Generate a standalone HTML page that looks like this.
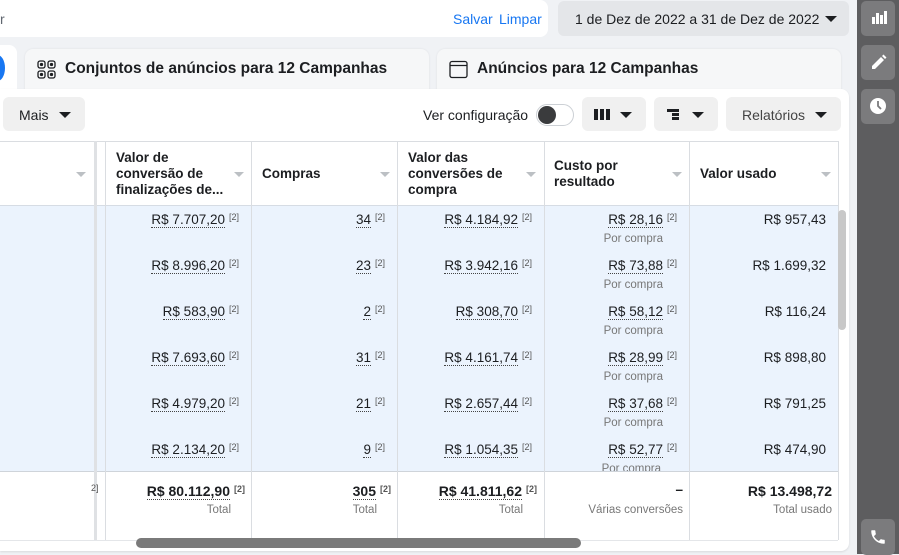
<!DOCTYPE html><html><head><style>
*{box-sizing:border-box;margin:0;padding:0}
body{width:899px;height:554px;overflow:hidden;background:#f0f2f5;font-family:"Liberation Sans",Arial,sans-serif;color:#1c1e21;position:relative}
.a{position:absolute}
.side{left:857px;top:0;width:42px;height:554px;background:#5d5d5f}
.sb{left:861px;width:34px;height:35px;background:#7b7b7d;border-radius:5px}
.btn{background:#f0f0f0;border-radius:6px;height:34px;top:97px}
.tri{display:inline-block;width:0;height:0;border-left:6px solid transparent;border-right:6px solid transparent;border-top:6px solid #1c1e21}
.hd{font-weight:bold;font-size:13.5px;line-height:16px;color:#1c1e21}
.st{width:0;height:0;border-left:5px solid transparent;border-right:5px solid transparent;border-top:5px solid #bcc0c4}
.v{font-size:13.5px;text-align:right;white-space:nowrap}
.u{border-bottom:1px dotted #444;}
sup{font-size:9px;color:#555;vertical-align:4px;margin-left:4px}
.sub{font-size:11.5px;color:#777;text-align:right}
.vl{width:1px;background:#dadde1}
</style></head><body>
<!-- top bar -->
<div class="a" style="left:0;top:0;width:548px;height:37px;background:#fff;border-radius:0 8px 8px 0"></div>
<div class="a" style="left:0;top:11px;font-size:14px;color:#606770">r</div>
<div class="a" style="left:453px;top:11px;font-size:14px;color:#1877f2">Salvar</div>
<div class="a" style="left:499px;top:11px;font-size:14px;color:#1877f2">Limpar</div>
<div class="a" style="left:558px;top:1px;width:291px;height:35px;background:#e4e6e9;border-radius:6px"></div>
<div class="a" style="left:575px;top:11px;font-size:14px;color:#1c1e21">1 de Dez de 2022 a 31 de Dez de 2022</div>
<div class="a tri" style="left:825px;top:16px"></div>
<!-- tabs -->
<div class="a" style="left:0;top:45px;width:17px;height:50px;background:#fff;border-radius:0 8px 0 0"></div>
<div class="a" style="left:-10px;top:55px;width:15px;height:26px;background:#1877f2;border-radius:50%"></div>
<div class="a" style="left:25px;top:49px;width:404px;height:42px;background:#f6f7f8;border-radius:8px 8px 0 0;box-shadow:0 0 2px rgba(0,0,0,.08)"></div>
<svg class="a" style="left:37px;top:60px" width="19" height="19" viewBox="0 0 19 19" fill="none" stroke="#1c1e21" stroke-width="1.3"><rect x="1" y="1" width="7" height="7" rx="2"/><rect x="11" y="1" width="7" height="7" rx="2"/><rect x="1" y="11" width="7" height="7" rx="2"/><rect x="11" y="11" width="7" height="7" rx="2"/><circle cx="4.5" cy="4.5" r="1" fill="#1c1e21"/><circle cx="14.5" cy="4.5" r="1" fill="#1c1e21"/><circle cx="4.5" cy="14.5" r="1" fill="#1c1e21"/><circle cx="14.5" cy="14.5" r="1" fill="#1c1e21"/></svg>
<div class="a" style="left:65px;top:60px;font-size:15.5px;font-weight:bold">Conjuntos de anúncios para 12 Campanhas</div>
<div class="a" style="left:437px;top:49px;width:404px;height:42px;background:#f6f7f8;border-radius:8px 8px 0 0;box-shadow:0 0 2px rgba(0,0,0,.08)"></div>
<svg class="a" style="left:449px;top:60px" width="19" height="19" viewBox="0 0 19 19" fill="none" stroke="#1c1e21" stroke-width="1.3"><rect x="1" y="1.5" width="17" height="16" rx="2"/><line x1="1" y1="5.5" x2="18" y2="5.5"/></svg>
<div class="a" style="left:477px;top:60px;font-size:15.5px;font-weight:bold">Anúncios para 12 Campanhas</div>
<!-- main panel -->
<div class="a" style="left:0;top:89px;width:849px;height:462px;background:#fff;border-radius:0 8px 8px 0;box-shadow:0 1px 2px rgba(0,0,0,.1)"></div>
<div class="a btn" style="left:3px;width:82px"></div>
<div class="a" style="left:19px;top:107px;font-size:14px">Mais</div>
<div class="a tri" style="left:59px;top:112px"></div>
<div class="a" style="left:423px;top:107px;font-size:14px">Ver configuração</div>
<div class="a" style="left:536px;top:104px;width:38px;height:22px;border:1px solid #ccd0d5;border-radius:11px;background:#fff"></div>
<div class="a" style="left:538px;top:106px;width:18px;height:18px;border-radius:50%;background:#3a3b3d"></div>
<div class="a btn" style="left:582px;width:64px"></div>
<div class="a" style="left:594px;top:109px;width:4px;height:11px;background:#1c1e21"></div>
<div class="a" style="left:600px;top:109px;width:4px;height:11px;background:#1c1e21"></div>
<div class="a" style="left:606px;top:109px;width:4px;height:11px;background:#1c1e21"></div>
<div class="a tri" style="left:620px;top:112px"></div>
<div class="a btn" style="left:654px;width:64px"></div>
<div class="a" style="left:667px;top:109px;width:12px;height:3px;background:#1c1e21"></div>
<div class="a" style="left:672px;top:113px;width:7px;height:3px;background:#1c1e21"></div>
<div class="a" style="left:672px;top:117px;width:7px;height:3px;background:#1c1e21"></div>
<div class="a tri" style="left:692px;top:112px"></div>
<div class="a btn" style="left:726px;width:115px"></div>
<div class="a" style="left:742px;top:107px;font-size:14px;color:#444">Relatórios</div>
<div class="a tri" style="left:815px;top:112px"></div>
<!-- table -->
<div class="a" style="left:0;top:141px;width:838px;height:1px;background:#dadde1"></div>
<div class="a" style="left:0;top:205px;width:838px;height:266px;background:#ebf3fd"></div>
<div class="a" style="left:0;top:205px;width:838px;height:1px;background:#d6dce4"></div>
<div class="a" style="left:0;top:471px;width:838px;height:1px;background:#cfd4da"></div>
<div class="a" style="left:94px;top:141px;width:3px;height:399px;background:#dfe1e4"></div>
<div class="a vl" style="left:105px;top:141px;height:399px"></div>
<div class="a vl" style="left:251px;top:141px;height:399px"></div>
<div class="a vl" style="left:397px;top:141px;height:399px"></div>
<div class="a vl" style="left:544px;top:141px;height:399px"></div>
<div class="a vl" style="left:689px;top:141px;height:399px"></div>
<div class="a vl" style="left:838px;top:141px;height:399px"></div>
<div class="a st" style="left:76px;top:172px"></div>
<div class="a hd" style="left:116px;top:150px">Valor de<br>conversão de<br>finalizações de...</div><div class="a st" style="left:234px;top:172px"></div>
<div class="a hd" style="left:262px;top:166px">Compras</div><div class="a st" style="left:380px;top:172px"></div>
<div class="a hd" style="left:408px;top:150px">Valor das<br>conversões de<br>compra</div><div class="a st" style="left:526px;top:172px"></div>
<div class="a hd" style="left:554px;top:158px">Custo por<br>resultado</div><div class="a st" style="left:672px;top:172px"></div>
<div class="a hd" style="left:700px;top:166px">Valor usado</div><div class="a st" style="left:821px;top:172px"></div>
<div class="a" style="left:838px;top:210px;width:8px;height:120px;background:#c8c8c8;border-radius:4px"></div>

<!-- rows -->
<div class="a v" style="right:660px;top:212px"><span class="u">R$ 7.707,20</span><sup>[2]</sup></div>
<div class="a v" style="right:514px;top:212px"><span class="u">34</span><sup>[2]</sup></div>
<div class="a v" style="right:367px;top:212px"><span class="u">R$ 4.184,92</span><sup>[2]</sup></div>
<div class="a v" style="right:222px;top:212px"><span class="u">R$ 28,16</span><sup>[2]</sup></div>
<div class="a sub" style="right:236px;top:233px">Por compra</div>
<div class="a v" style="right:73px;top:212px">R$ 957,43</div>

<div class="a v" style="right:660px;top:258px"><span class="u">R$ 8.996,20</span><sup>[2]</sup></div>
<div class="a v" style="right:514px;top:258px"><span class="u">23</span><sup>[2]</sup></div>
<div class="a v" style="right:367px;top:258px"><span class="u">R$ 3.942,16</span><sup>[2]</sup></div>
<div class="a v" style="right:222px;top:258px"><span class="u">R$ 73,88</span><sup>[2]</sup></div>
<div class="a sub" style="right:236px;top:279px">Por compra</div>
<div class="a v" style="right:73px;top:258px">R$ 1.699,32</div>

<div class="a v" style="right:660px;top:304px"><span class="u">R$ 583,90</span><sup>[2]</sup></div>
<div class="a v" style="right:514px;top:304px"><span class="u">2</span><sup>[2]</sup></div>
<div class="a v" style="right:367px;top:304px"><span class="u">R$ 308,70</span><sup>[2]</sup></div>
<div class="a v" style="right:222px;top:304px"><span class="u">R$ 58,12</span><sup>[2]</sup></div>
<div class="a sub" style="right:236px;top:325px">Por compra</div>
<div class="a v" style="right:73px;top:304px">R$ 116,24</div>

<div class="a v" style="right:660px;top:350px"><span class="u">R$ 7.693,60</span><sup>[2]</sup></div>
<div class="a v" style="right:514px;top:350px"><span class="u">31</span><sup>[2]</sup></div>
<div class="a v" style="right:367px;top:350px"><span class="u">R$ 4.161,74</span><sup>[2]</sup></div>
<div class="a v" style="right:222px;top:350px"><span class="u">R$ 28,99</span><sup>[2]</sup></div>
<div class="a sub" style="right:236px;top:371px">Por compra</div>
<div class="a v" style="right:73px;top:350px">R$ 898,80</div>

<div class="a v" style="right:660px;top:396px"><span class="u">R$ 4.979,20</span><sup>[2]</sup></div>
<div class="a v" style="right:514px;top:396px"><span class="u">21</span><sup>[2]</sup></div>
<div class="a v" style="right:367px;top:396px"><span class="u">R$ 2.657,44</span><sup>[2]</sup></div>
<div class="a v" style="right:222px;top:396px"><span class="u">R$ 37,68</span><sup>[2]</sup></div>
<div class="a sub" style="right:236px;top:417px">Por compra</div>
<div class="a v" style="right:73px;top:396px">R$ 791,25</div>

<div class="a v" style="right:660px;top:442px"><span class="u">R$ 2.134,20</span><sup>[2]</sup></div>
<div class="a v" style="right:514px;top:442px"><span class="u">9</span><sup>[2]</sup></div>
<div class="a v" style="right:367px;top:442px"><span class="u">R$ 1.054,35</span><sup>[2]</sup></div>
<div class="a v" style="right:222px;top:442px"><span class="u">R$ 52,77</span><sup>[2]</sup></div>
<div class="a v" style="right:73px;top:442px">R$ 474,90</div>
<div class="a" style="left:545px;top:460px;width:293px;height:11px;overflow:hidden"><div class="sub" style="position:absolute;right:177px;top:3px">Por compra</div></div>

<!-- footer -->
<div class="a" style="left:91px;top:483px;font-size:9px;color:#555">2]</div>
<div class="a v" style="right:654px;top:483px;font-weight:bold;font-size:14px"><span class="u">R$ 80.112,90</span><sup>[2]</sup></div>
<div class="a sub" style="right:668px;top:504px">Total</div>
<div class="a v" style="right:508px;top:483px;font-weight:bold;font-size:14px"><span class="u">305</span><sup>[2]</sup></div>
<div class="a sub" style="right:522px;top:504px">Total</div>
<div class="a v" style="right:362px;top:483px;font-weight:bold;font-size:14px"><span class="u">R$ 41.811,62</span><sup>[2]</sup></div>
<div class="a sub" style="right:376px;top:504px">Total</div>
<div class="a v" style="right:216px;top:482px;font-weight:bold">–</div>
<div class="a sub" style="right:216px;top:504px">Várias conversões</div>
<div class="a v" style="right:67px;top:483px;font-weight:bold;font-size:14px">R$ 13.498,72</div>
<div class="a sub" style="right:67px;top:504px">Total usado</div>
<div class="a" style="left:0;top:540px;width:838px;height:1px;background:#e4e6e9"></div>
<div class="a" style="left:136px;top:538px;width:445px;height:10px;background:#7a7a7a;border-radius:5px"></div>

<!-- sidebar -->
<div class="a side"></div>
<div class="a sb" style="top:1px"></div>
<div class="a" style="left:872px;top:17px;width:3px;height:7px;background:#fff"></div>
<div class="a" style="left:876px;top:13px;width:3px;height:11px;background:#fff"></div>
<div class="a" style="left:880px;top:15px;width:3px;height:9px;background:#fff"></div>
<div class="a" style="left:884px;top:11px;width:3px;height:13px;background:#fff"></div>
<div class="a sb" style="top:45px"></div>
<svg class="a" style="left:870px;top:54px" width="17" height="17" viewBox="0 0 17 17"><path d="M2 12 L11 3 L14 6 L5 15 L2 15 Z M12 2 L13.5 0.5 L16.5 3.5 L15 5 Z" fill="#fff"/></svg>
<div class="a sb" style="top:89px"></div>
<svg class="a" style="left:869px;top:97px" width="18" height="18" viewBox="0 0 18 18"><circle cx="9" cy="9" r="8" fill="#fff"/><path d="M9 4 V9 L12 12" stroke="#7b7b7d" stroke-width="1.8" fill="none"/></svg>
<div class="a sb" style="top:519px;height:36px"></div>
<svg class="a" style="left:869px;top:528px" width="18" height="18" viewBox="0 0 24 24"><path d="M6.6 10.8c1.4 2.8 3.8 5.1 6.6 6.6l2.2-2.2c.3-.3.7-.4 1-.2 1.1.4 2.3.6 3.6.6.6 0 1 .4 1 1V20c0 .6-.4 1-1 1C10.6 21 3 13.4 3 4c0-.6.4-1 1-1h3.5c.6 0 1 .4 1 1 0 1.3.2 2.5.6 3.6.1.3 0 .7-.2 1L6.6 10.8z" fill="#fff"/></svg>
</body></html>
